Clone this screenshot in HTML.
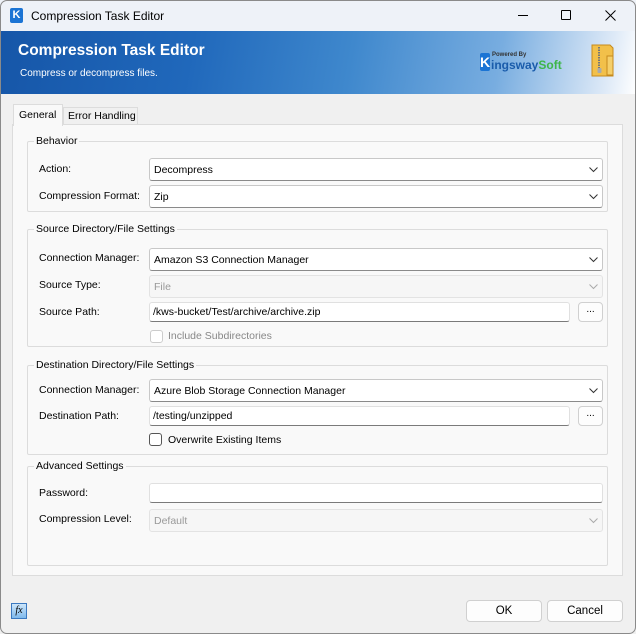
<!DOCTYPE html>
<html><head><meta charset="utf-8"><style>
*{box-sizing:border-box;margin:0;padding:0}
body{width:636px;height:634px;overflow:hidden;background:#f0f0f0;font-family:"Liberation Sans",sans-serif;font-size:10.5px;color:#000;position:relative}
.a{position:absolute}
.frame{left:0;top:0;width:636px;height:634px;border:1px solid #8a8a8a;border-radius:7px;z-index:9}
.title{left:0;top:0;width:636px;height:31px;background:#eef2f8}
.banner{left:0;top:31px;width:636px;height:63px;background:linear-gradient(100deg,#1656a8 0%,#2068bb 30%,#3f88cd 55%,#78ade0 78%,#dde9f7 95%,#fff 100%)}
.panel{left:12px;top:124px;width:611px;height:452px;background:#f9f9f9;border:1px solid #dcdcdc}
.grp{border:1px solid #dcdcdc;border-radius:2px}
.gt{background:#f9f9f9;padding:0 2px}
.cb{height:23px;background:#fff;border:1px solid #c8c8c8;border-bottom-color:#8a8a8a;border-radius:3px;padding:5px 0 0 4px}
.cb.d{background:#f6f6f6;border-color:#e3e3e3;color:#999}
.cb svg{position:absolute;right:4px;top:8px}
.tb{height:20px;background:#fff;border:1px solid #e0e0e0;border-bottom:1px solid #7a7a7a;border-radius:3px;padding:3px 0 0 3px}
.btn{background:#fdfdfd;border:1px solid #d0d0d0;border-radius:4px;text-align:center}
.chk{width:13px;height:13px;border:1px solid #555;border-radius:3px;background:#fff}
</style></head><body>
<div class="a title">
 <div class="a" style="left:10px;top:8px;width:13px;height:15px;background:#1b74d4;border-radius:2px;color:#fff;font-weight:bold;font-size:11px;text-align:center;line-height:15px">K</div>
 <div class="a" style="left:31px;top:9px;font-size:12px">Compression Task Editor</div>
 <div class="a" style="left:518px;top:15px;width:10px;height:1px;background:#000"></div>
 <div class="a" style="left:561px;top:10px;width:10px;height:10px;border:1px solid #000;border-radius:1px"></div>
 <svg class="a" style="left:605px;top:10px" width="11" height="11"><path d="M0.5 0.5L10.5 10.5M10.5 0.5L0.5 10.5" stroke="#000" stroke-width="1"/></svg>
</div>
<div class="a banner">
 <div class="a" style="left:18px;top:11px;color:#fff;font-size:15.5px;font-weight:bold">Compression Task Editor</div>
 <div class="a" style="left:20px;top:37px;color:#fff;font-size:10px">Compress or decompress files.</div>
 <div class="a" style="left:480px;top:22px;width:10px;height:18px;background:#1b74d4;border-radius:2px;color:#fff;font-weight:bold;font-size:14px;line-height:18px;text-align:center">K</div>
 <div class="a" style="left:492px;top:21px;font-size:6px;font-weight:bold;color:#333">Powered By</div>
 <div class="a" style="left:491px;top:27px;font-size:12px;font-weight:bold;color:#1a5cab">ingsway<span style="color:#3eb649">Soft</span></div>
 <svg class="a" style="left:590px;top:13px" width="24" height="34"><path d="M2 1h18l3 3v28H2z" fill="#f2c04a" stroke="#c68a1c"/><path d="M17 12h6v19h-6z" fill="#f5cf6a" stroke="#c68a1c"/><path d="M9 3v22" stroke="#777" stroke-width="2" stroke-dasharray="1.5 1"/><rect x="7.5" y="24" width="4" height="5" rx="1" fill="#aaa"/></svg>
</div>
<div class="a panel"></div>
<div class="a" style="left:13px;top:104px;width:50px;height:22px;background:#f9f9f9;border:1px solid #dcdcdc;border-bottom:none"></div>
<div class="a" style="left:19px;top:109px">General</div>
<div class="a" style="left:63px;top:107px;width:75px;height:17px;background:#f0f0f0;border:1px solid #dcdcdc;border-bottom:none"></div>
<div class="a" style="left:68px;top:110px">Error Handling</div>

<div class="a grp" style="left:27px;top:141px;width:581px;height:71px"></div>
<div class="a gt" style="left:34px;top:135px">Behavior</div>
<div class="a" style="left:39px;top:163px">Action:</div>
<div class="a cb" style="left:149px;top:158px;width:454px">Decompress<svg width="9" height="6"><path d="M0.5 0.5L4.5 4.5L8.5 0.5" stroke="#333" fill="none"/></svg></div>
<div class="a" style="left:39px;top:190px">Compression Format:</div>
<div class="a cb" style="left:149px;top:185px;width:454px">Zip<svg width="9" height="6"><path d="M0.5 0.5L4.5 4.5L8.5 0.5" stroke="#333" fill="none"/></svg></div>

<div class="a grp" style="left:27px;top:229px;width:581px;height:118px"></div>
<div class="a gt" style="left:34px;top:223px">Source Directory/File Settings</div>
<div class="a" style="left:39px;top:252px">Connection Manager:</div>
<div class="a cb" style="left:149px;top:248px;width:454px">Amazon S3 Connection Manager<svg width="9" height="6"><path d="M0.5 0.5L4.5 4.5L8.5 0.5" stroke="#333" fill="none"/></svg></div>
<div class="a" style="left:39px;top:279px">Source Type:</div>
<div class="a cb d" style="left:149px;top:275px;width:454px">File<svg width="9" height="6"><path d="M0.5 0.5L4.5 4.5L8.5 0.5" stroke="#aaa" fill="none"/></svg></div>
<div class="a" style="left:39px;top:306px">Source Path:</div>
<div class="a tb" style="left:149px;top:302px;width:421px">/kws-bucket/Test/archive/archive.zip</div>
<div class="a btn" style="left:578px;top:302px;width:25px;height:20px;font-size:10px;line-height:14px">...</div>
<div class="a chk" style="left:150px;top:330px;border-color:#ccc"></div>
<div class="a" style="left:168px;top:330px;color:#888">Include Subdirectories</div>

<div class="a grp" style="left:27px;top:365px;width:581px;height:90px"></div>
<div class="a gt" style="left:34px;top:359px">Destination Directory/File Settings</div>
<div class="a" style="left:39px;top:384px">Connection Manager:</div>
<div class="a cb" style="left:149px;top:379px;width:454px">Azure Blob Storage Connection Manager<svg width="9" height="6"><path d="M0.5 0.5L4.5 4.5L8.5 0.5" stroke="#333" fill="none"/></svg></div>
<div class="a" style="left:39px;top:410px">Destination Path:</div>
<div class="a tb" style="left:149px;top:406px;width:421px">/testing/unzipped</div>
<div class="a btn" style="left:578px;top:406px;width:25px;height:20px;font-size:10px;line-height:14px">...</div>
<div class="a chk" style="left:149px;top:433px"></div>
<div class="a" style="left:168px;top:434px">Overwrite Existing Items</div>

<div class="a grp" style="left:27px;top:466px;width:581px;height:100px"></div>
<div class="a gt" style="left:34px;top:460px">Advanced Settings</div>
<div class="a" style="left:39px;top:487px">Password:</div>
<div class="a tb" style="left:149px;top:483px;width:454px"></div>
<div class="a" style="left:39px;top:513px">Compression Level:</div>
<div class="a cb d" style="left:149px;top:509px;width:454px">Default<svg width="9" height="6"><path d="M0.5 0.5L4.5 4.5L8.5 0.5" stroke="#aaa" fill="none"/></svg></div>

<div class="a" style="left:11px;top:603px;width:16px;height:16px;background:linear-gradient(#cde6fb,#7fb9ec);border:1px solid #3a78c0;font-family:'Liberation Serif',serif;font-style:italic;font-size:10px;text-align:center;line-height:14px">fx</div>
<div class="a btn" style="left:466px;top:600px;width:76px;height:22px;font-size:11.5px;line-height:20px">OK</div>
<div class="a btn" style="left:547px;top:600px;width:76px;height:22px;font-size:11.5px;line-height:20px">Cancel</div>
<div class="a frame"></div>
</body></html>
